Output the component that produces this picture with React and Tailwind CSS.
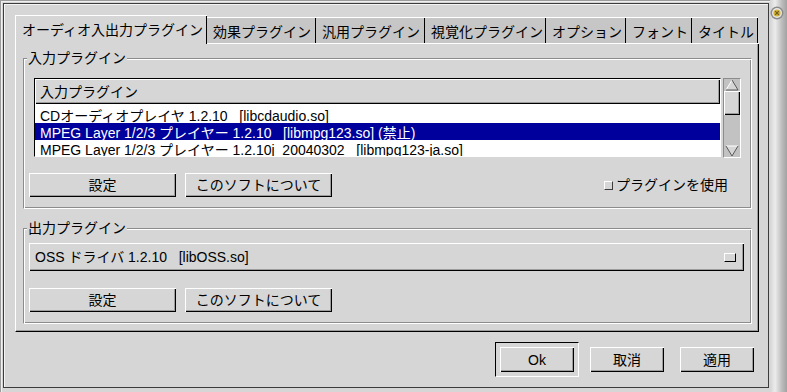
import React from 'react';

// GTK1-ish bevels
const raised = 'bg-[#d6d6d6] shadow-[inset_1px_1px_0_#ffffff,inset_-1px_-1px_0_#000000,inset_-2px_-2px_0_#9c9c9c]';
const etched = 'border border-[#8c8c8c] border-r-white border-b-white shadow-[inset_1px_1px_0_#ffffff,inset_-1px_-1px_0_#8c8c8c]';

const tabs = [
    { label: 'オーディオ入出力プラグイン', w: 'w-[192px]' },
    { label: '効果プラグイン', w: 'w-[109px]' },
    { label: '汎用プラグイン', w: 'w-[109px]' },
    { label: '視覚化プラグイン', w: 'w-[121px]' },
    { label: 'オプション', w: 'w-[80px]' },
    { label: 'フォント', w: 'w-[66px]' },
    { label: 'タイトル', w: 'w-[66px]' },
];

const inputPlugins = [
    { name: 'CDオーディオプレイヤ 1.2.10   [libcdaudio.so]' },
    { name: 'MPEG Layer 1/2/3 プレイヤー 1.2.10   [libmpg123.so] (禁止)', selected: true },
    { name: 'MPEG Layer 1/2/3 プレイヤー 1.2.10j_20040302   [libmpg123-ja.so]' },
];

const Button = ({ className = '', children }) => (
    <div className={`${raised} flex items-center justify-center leading-[16px] ${className}`}>
        {children}
    </div>
);

const Frame = ({ label, className = '', children }) => (
    <div className={`relative ${etched} ${className}`}>
        <div className="absolute -top-[9px] left-[3px] px-[1px] bg-[#d6d6d6] leading-[16px]">{label}</div>
        {children}
    </div>
);

const ScrollBar = () => (
    <div className="w-[18px] h-[80px] flex flex-col bg-[#c2c2c2] border border-[#8c8c8c] border-r-white border-b-white">
        <svg width="16" height="12" viewBox="0 0 16 12" className="shrink-0">
            <polygon points="8,1 14,11 2,11" fill="#d6d6d6" />
            <polyline points="2,11 8,1" stroke="#ffffff" fill="none" />
            <polyline points="8,1 14,11 2,11" stroke="#5a5a5a" fill="none" />
        </svg>
        <div className={`${raised} h-[24px] w-[16px]`} />
        <div className="flex-1" />
        <svg width="16" height="12" viewBox="0 0 16 12" className="shrink-0">
            <polygon points="2,1 14,1 8,11" fill="#d6d6d6" />
            <polyline points="2,1 14,1" stroke="#ffffff" fill="none" />
            <polyline points="2,1 8,11 14,1" stroke="#5a5a5a" fill="none" />
        </svg>
    </div>
);

export default function App() {
    return (
        <div className="flex w-[787px] h-[392px] overflow-hidden bg-[#d6d6d6] text-[14px] text-black font-['Liberation_Sans','Noto_Sans_CJK_JP',sans-serif]">
            {/* dialog body */}
            <div className="w-[770px] h-full pl-[3px] pt-[3px] pr-[1px] pb-[4px] shadow-[inset_1px_1px_0_#9c9c9c,inset_2px_2px_0_#f0f0f0]">
                <div className="w-[766px] h-[385px] flex flex-col border border-[#3c3c3c] shadow-[inset_1px_1px_0_#f4f4f4] pl-[11px] pt-[11px]">
                    {/* notebook */}
                    <div className="w-[744px] h-[317px] flex flex-col">
                        <div className="flex items-end h-[29px]">
                            {tabs.map((t, i) =>
                                i === 0 ? (
                                    <div key={t.label} className={`${t.w} h-[29px] border-l border-t border-white shadow-[inset_-1px_0_0_#000000] pl-[6px] pt-[6px] leading-[16px] whitespace-nowrap`}>
                                        {t.label}
                                    </div>
                                ) : (
                                    <div key={t.label} className={`${t.w} h-[27px] bg-[#c6c6c6] border-t border-b border-white shadow-[inset_-1px_0_0_#000000] pl-[6px] pt-[6px] leading-[16px] whitespace-nowrap`}>
                                        {t.label}
                                    </div>
                                )
                            )}
                            <div className="flex-1 border-b border-white" />
                        </div>

                        {/* page */}
                        <div className="h-[288px] flex flex-col border-l border-white border-r border-r-black border-b border-b-black shadow-[inset_-1px_-1px_0_#9c9c9c] pl-[7px]">
                            <Frame label="入力プラグイン" className="mt-[14px] w-[729px] h-[151px] flex flex-col">
                                <div className="flex mt-[19px] ml-[10px] gap-[2px]">
                                    <div className="w-[687px] h-[79px] mb-[1px] flex flex-col overflow-hidden bg-white border border-black border-r-white border-b-white">
                                        <div className={`${raised} h-[25px] shrink-0 flex items-center pl-[5px] leading-[16px]`}>入力プラグイン</div>
                                        <div className="h-[2px] shrink-0" />
                                        {inputPlugins.map(p => (
                                            <div
                                                key={p.name}
                                                className={`h-[17px] shrink-0 pl-[5px] pt-[2px] leading-[16px] whitespace-pre ${p.selected ? 'bg-[#00009c] text-white' : ''}`}
                                            >
                                                {p.name}
                                            </div>
                                        ))}
                                    </div>
                                    <ScrollBar />
                                </div>
                                <div className="flex items-center mt-[15px] pl-[5px] pr-[23px]">
                                    <Button className="w-[147px] h-[24px]">設定</Button>
                                    <Button className="w-[147px] h-[24px] ml-[9px]">このソフトについて</Button>
                                    <div className="ml-auto flex items-center gap-[3px] leading-[16px]">
                                        <div className="w-[9px] h-[9px] border border-white border-r-[#3c3c3c] border-b-[#3c3c3c]" />
                                        <span>プラグインを使用</span>
                                    </div>
                                </div>
                            </Frame>

                            <Frame label="出力プラグイン" className="mt-[19px] w-[729px] h-[96px] flex flex-col">
                                <div className={`${raised} mt-[14px] ml-[5px] w-[715px] h-[28px] flex items-center pl-[6px] pr-[8px] leading-[16px]`}>
                                    <span className="whitespace-pre">OSS ドライバ 1.2.10   [libOSS.so]</span>
                                    <div className="ml-auto w-[12px] h-[9px] border border-white border-r-black border-b-black" />
                                </div>
                                <div className="flex mt-[17px] pl-[5px]">
                                    <Button className="w-[147px] h-[24px]">設定</Button>
                                    <Button className="w-[147px] h-[24px] ml-[9px]">このソフトについて</Button>
                                </div>
                            </Frame>
                        </div>
                    </div>

                    {/* dialog buttons */}
                    <div className="flex items-center justify-end mt-[10px] pr-[14px]">
                        <div className="w-[84px] h-[35px] p-[4px] border border-black border-r-white border-b-white">
                            <Button className="w-[74px] h-[25px]">Ok</Button>
                        </div>
                        <Button className="w-[74px] h-[25px] ml-[11px]">取消</Button>
                        <Button className="w-[74px] h-[25px] ml-[16px]">適用</Button>
                    </div>
                </div>
            </div>

            {/* window frame edge */}
            <div className="w-[17px] h-full flex flex-col items-start bg-[linear-gradient(to_right,#d4d4d4_0%,#ececec_30%,#bcbcbc_70%,#a2a2a2_100%)]">
                <svg width="14" height="14" viewBox="0 0 14 14" className="mt-[6px]">
                    <circle cx="7" cy="7" r="6.5" fill="#8a8a8a" />
                    <circle cx="7" cy="7" r="5" fill="#e8e8e8" />
                    <circle cx="7" cy="7" r="3.6" fill="#d4b23a" />
                    <path d="M5.2 5.2 L8.8 8.8 M8.8 5.2 L5.2 8.8" stroke="#6b5a1a" strokeWidth="1.1" />
                </svg>
            </div>
        </div>
    );
}
